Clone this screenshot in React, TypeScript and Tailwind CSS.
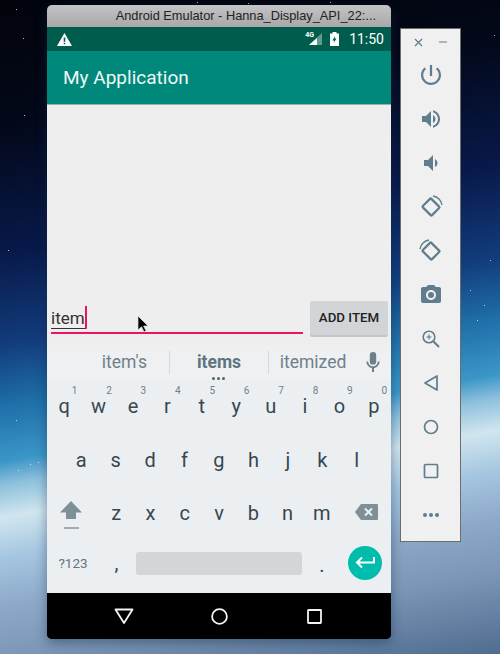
const rows = [
  [['q', '1'], ['w', '2'], ['e', '3'], ['r', '4'], ['t', '5'], ['y', '6'], ['u', '7'], ['i', '8'], ['o', '9'], ['p', '0']],
];
const homeRow = ['a', 's', 'd', 'f', 'g', 'h', 'j', 'k', 'l'];
const lowerRow = ['z', 'x', 'c', 'v', 'b', 'n', 'm'];
const stars = [
  [16, 9], [23, 38], [197, 2], [248, 3], [330, 2], [24, 115], [8, 250], [494, 35], [470, 290], [484, 305], [477, 320], [490, 260], [16, 420], [30, 464], [18, 470], [38, 462],
];

function Key({ letter, hint }: { letter: string; hint?: string }) {
  return (
    <div className="relative flex h-full flex-1 items-center justify-center text-[20px] text-[#37474f]">
      {hint && <span className="absolute right-[4px] top-[6px] text-[10px] leading-3 text-[#6f8089]">{hint}</span>}
      {letter}
    </div>
  );
}

function Tool({ children }: { children: React.ReactNode }) {
  return <div className="flex h-11 items-center justify-center text-[#5f7d8c]">{children}</div>;
}

function SideBar() {
  return (
    <div className="absolute left-[400px] top-[28px] h-[514px] w-[61px] border border-[#6c6c6c] bg-[#f0f0f0]">
      <div className="flex h-6 items-center justify-between pl-[13px] pr-[13px] pt-[2px]">
        <svg width="9" height="9" viewBox="0 0 9 9" stroke="#5f7d8c" strokeWidth="1.3"><path d="M1 1l7 7M8 1l-7 7" /></svg>
        <div className="h-[2px] w-2 bg-[#a9b8c0]" />
      </div>
      <Tool>
        <svg width="20" height="20" viewBox="3 3 18 18" fill="currentColor"><path d="M13 3h-2v10h2V3zm4.83 2.17l-1.42 1.42C17.99 7.86 19 9.81 19 12c0 3.87-3.13 7-7 7s-7-3.13-7-7c0-2.19 1.01-4.14 2.58-5.42L6.17 5.17C4.23 6.82 3 9.26 3 12c0 4.97 4.03 9 9 9s9-4.03 9-9c0-2.74-1.23-5.18-3.17-6.83z" /></svg>
      </Tool>
      <Tool>
        <svg width="24" height="24" viewBox="0 0 24 24" fill="currentColor"><path d="M3 9v6h4l5 5V4L7 9H3zm13.5 3c0-1.77-1.02-3.29-2.5-4.03v8.05c1.48-.73 2.5-2.25 2.5-4.02zM14 3.23v2.06c2.89.86 5 3.54 5 6.71s-2.11 5.85-5 6.71v2.06c4.01-.91 7-4.49 7-8.77s-2.99-7.86-7-8.77z" /></svg>
      </Tool>
      <Tool>
        <svg width="24" height="24" viewBox="0 0 24 24" fill="currentColor"><path d="M18.5 12c0-1.77-1.02-3.29-2.5-4.03v8.05c1.48-.73 2.5-2.25 2.5-4.02zM5 9v6h4l5 5V4L9 9H5z" /></svg>
      </Tool>
      <Tool>
        <svg width="24" height="24" viewBox="0 0 24 24" fill="none" stroke="currentColor">
          <rect x="5.5" y="6" width="13" height="12" rx="1" strokeWidth="2.2" transform="rotate(45 12 12)" />
          <path d="M14 1a10.5 10.5 0 0 1 9 9" strokeWidth="1.4" />
        </svg>
      </Tool>
      <Tool>
        <svg width="24" height="24" viewBox="0 0 24 24" fill="none" stroke="currentColor">
          <rect x="5.5" y="6" width="13" height="12" rx="1" strokeWidth="2.2" transform="rotate(45 12 12)" />
          <path d="M10 1a10.5 10.5 0 0 0-9 9" strokeWidth="1.4" />
        </svg>
      </Tool>
      <Tool>
        <svg width="24" height="24" viewBox="0 0 24 24" fill="currentColor" fillRule="evenodd"><path d="M9 2L7.17 4H4c-1.1 0-2 .9-2 2v12c0 1.1.9 2 2 2h16c1.1 0 2-.9 2-2V6c0-1.1-.9-2-2-2h-3.17L15 2H9zm3 15c-2.76 0-5-2.24-5-5s2.24-5 5-5 5 2.24 5 5-2.24 5-5 5zm0-2a3 3 0 1 0 0-6 3 3 0 0 0 0 6z" /></svg>
      </Tool>
      <Tool>
        <svg width="20" height="20" viewBox="0 0 20 20" fill="none" stroke="currentColor" strokeWidth="1.6">
          <circle cx="8" cy="8" r="5.8" />
          <path d="M12.5 12.5l5.5 5.5" strokeWidth="2" />
          <path d="M5.5 8h5M8 5.5v5" strokeWidth="1.2" />
        </svg>
      </Tool>
      <Tool>
        <svg width="16" height="18" viewBox="0 0 16 18" fill="none" stroke="currentColor" strokeWidth="1.7" strokeLinejoin="round"><path d="M14 2v14L2 9z" /></svg>
      </Tool>
      <Tool>
        <svg width="16" height="16" viewBox="0 0 16 16" fill="none" stroke="currentColor" strokeWidth="1.7"><circle cx="8" cy="8" r="6.5" /></svg>
      </Tool>
      <Tool>
        <svg width="16" height="16" viewBox="0 0 16 16" fill="none" stroke="currentColor" strokeWidth="1.7"><rect x="1.5" y="1.5" width="13" height="13" rx="1" /></svg>
      </Tool>
      <Tool>
        <div className="flex gap-[2px]">
          <span className="h-1 w-1 rounded-full bg-[#5f7d8c]" />
          <span className="h-1 w-1 rounded-full bg-[#5f7d8c]" />
          <span className="h-1 w-1 rounded-full bg-[#5f7d8c]" />
        </div>
      </Tool>
    </div>
  );
}

function Keyboard() {
  return (
    <div className="flex h-[248px] flex-col bg-[#eceff1]">
      <div className="relative flex h-[34px] items-center bg-[#eef0f2] text-[17.5px] text-[#6e808b]">
        <div className="flex w-[122px] justify-end pr-[22px]">item's</div>
        <div className="h-[23px] w-px bg-[#cfdbe2]" />
        <div className="flex w-[98px] justify-center font-bold text-[#5f7480]">items</div>
        <div className="h-[23px] w-px bg-[#cfdbe2]" />
        <div className="flex w-[88px] justify-center">itemized</div>
        <svg className="ml-[7px]" width="18" height="22" viewBox="0 0 18 22" fill="#6e808b">
          <path d="M9 1a3.2 3.2 0 0 0-3.2 3.2v6.2a3.2 3.2 0 0 0 6.4 0V4.2A3.2 3.2 0 0 0 9 1z" />
          <path d="M2.4 10.4c0 3.6 2.9 6.2 5.6 6.6V21h2v-4c2.700-.4 5.600-3 5.600-6.600h-1.800c0 3-2.500 4.900-4.800 4.900s-4.800-1.900-4.800-4.900z" />
        </svg>
        <div className="absolute bottom-[-1px] left-[165px] flex gap-[2px]">
          <span className="h-[3px] w-[3px] rounded-full bg-[#4f616b]" />
          <span className="h-[3px] w-[3px] rounded-full bg-[#4f616b]" />
          <span className="h-[3px] w-[3px] rounded-full bg-[#4f616b]" />
        </div>
      </div>

      <div className="flex h-[54px]">
        {rows[0].map(([letter, hint]) => <Key key={letter} letter={letter} hint={hint} />)}
      </div>

      <div className="flex h-[53px] px-[17px]">
        {homeRow.map((letter) => <Key key={letter} letter={letter} />)}
      </div>

      <div className="flex h-[53px]">
        <div className="flex w-[52px] items-center justify-center pr-[4px] pt-[5px]">
          <svg width="24" height="30" viewBox="0 0 24 30" fill="#7f8f97">
            <path d="M12 1L1 12.500h6V19h10v-6.500h6z" />
            <rect x="5" y="27" width="15" height="2" fill="#a2adb3" />
          </svg>
        </div>
        <div className="flex flex-1">
          {lowerRow.map((letter) => <Key key={letter} letter={letter} />)}
        </div>
        <div className="flex w-[52px] items-center justify-center pl-[2px] pb-[1px]">
          <svg width="24" height="18" viewBox="0 0 24 18">
            <path d="M7 1h16a1 1 0 0 1 1 1v14a1 1 0 0 1-1 1H7l-6-8z" fill="#7f8f97" />
            <path d="M11 5.500l7 7M18 5.500l-7 7" stroke="#eceff1" strokeWidth="2" />
          </svg>
        </div>
      </div>

      <div className="flex flex-1 items-center pb-[6px]">
        <div className="flex w-[52px] justify-center text-[13.5px] text-[#65757e]">?123</div>
        <div className="mr-[2px] flex w-[35px] justify-center text-[20px] text-[#37474f]">,</div>
        <div className="h-[23px] w-[166px] rounded-[3px] bg-[#d2d6d9]" />
        <div className="mr-[6px] flex w-[40px] justify-center pt-[3px] text-[20px] text-[#37474f]">.</div>
        <div className="flex h-[34px] w-[34px] items-center justify-center rounded-full bg-[#00bcac]">
          <svg width="20" height="14" viewBox="0 0 20 14" fill="none" stroke="#fff" strokeWidth="2"><path d="M19 1v5.500H3M7 1.500L2 6.500l5 5" /></svg>
        </div>
      </div>
    </div>
  );
}

export default function App() {
  return (
    <div
      className="relative h-[654px] w-[500px] overflow-hidden bg-[linear-gradient(170deg,#02040c_0,#030818_120px,#08194a_250px,#123c7c_340px,#1f6fa8_400px,#3b96c8_455px,#8cc0dc_478px,#d0e6ef_510px,#a5c6e0_550px,#8ca8c8_600px,#7b96b6_650px,#4f6d90_731px)] font-['Roboto',sans-serif]"
    >
      {stars.map(([x, y]) => (
        <span key={`${x}-${y}`} className="absolute h-px w-px bg-white/70" style={{ left: x, top: y }} />
      ))}

      <div className="absolute left-[47px] top-[5px] flex h-[634px] w-[344px] flex-col overflow-hidden rounded-[5px] bg-black shadow-[0_4px_12px_rgba(20,40,70,0.45)]">
        <div className="flex h-[22px] items-center justify-end bg-[linear-gradient(#c4c3c5,#a8a7a9)] pr-[15px] font-['Liberation_Sans',sans-serif] text-[12.8px] text-[#222]">
          Android Emulator - Hanna_Display_API_22:...
        </div>

        <div className="flex h-[24px] items-center bg-[#005c4d] pl-[10px] pr-[7px] text-white">
          <svg width="15" height="13" viewBox="0 0 15 13" fill="#fff"><path d="M7.500 0L15 13H0zM6.700 4.500v4.200h1.600V4.500zm0 5.200v1.600h1.600V9.700z" fillRule="evenodd" /></svg>
          <div className="flex-1" />
          <span className="relative mr-[8px] h-3 w-[17px]">
            <svg className="absolute bottom-0 right-0" width="13" height="12" viewBox="0 0 13 12"><path d="M13 0v12H0z" fill="#5d9c90" /><path d="M8 5v7H0z" fill="#fff" /></svg>
            <span className="absolute -top-[2px] left-0 text-[7px] font-bold leading-2">4G</span>
          </span>
          <svg className="mr-[10px]" width="9" height="14" viewBox="0 0 9 14" fill="#fff"><path fillRule="evenodd" d="M2.500 0h4v1.500H9V14H0V1.500h2.500zM5 4L2.500 8.500h1.700L3.700 11l2.800-4.500H4.800z" /></svg>
          <span className="text-[14px]">11:50</span>
        </div>

        <div className="flex h-[54px] items-center border-b border-[#8fb8b0] bg-[#00897b] pl-[16px] pt-[1px] text-[19px] text-[#f0f8f6]">
          My Application
        </div>

        <div className="flex h-[240px] items-end gap-[7px] bg-[#eeeeee] pb-[11px] pl-[4px]">
          <div className="flex h-[28px] w-[252px] items-start border-b-2 border-[#ec1264]">
            <span className="mt-[2px] border-b border-[#333] text-[17px] leading-[20px] text-[#333]">item</span>
            <span className="h-[23px] w-[2px] bg-[#ec1264]" />
          </div>
          <button className="mb-[-1px] flex h-[34px] w-[78px] items-center justify-center rounded-[2px] bg-[#d2d5d7] text-[13.3px] font-medium text-[#222] shadow-[0_2px_0_#c4c4c4]">
            ADD ITEM
          </button>
        </div>

        <Keyboard />

        <div className="flex flex-1 items-center bg-black pl-[67px]">
          <svg width="20" height="16" viewBox="0 0 20 16" fill="none" stroke="#f4f4f4" strokeWidth="1.800" strokeLinejoin="round"><path d="M1.500 1.500h17L10 15z" /></svg>
          <svg className="ml-[77px]" width="17" height="17" viewBox="0 0 17 17" fill="none" stroke="#f4f4f4" strokeWidth="1.800"><circle cx="8.500" cy="8.500" r="7.400" /></svg>
          <svg className="ml-[79px]" width="15" height="15" viewBox="0 0 15 15" fill="none" stroke="#f4f4f4" strokeWidth="1.800"><rect x="1" y="1" width="13" height="13" rx="0.5" /></svg>
        </div>
      </div>

      <svg className="absolute left-[137px] top-[315px]" width="12" height="18" viewBox="0 0 12 18">
        <path d="M1 1v14l3.500-3.200 2.500 5 2-1-2.400-4.800H11z" fill="#000" stroke="#ddd" strokeWidth="0.7" />
      </svg>

      <SideBar />
    </div>
  );
}
